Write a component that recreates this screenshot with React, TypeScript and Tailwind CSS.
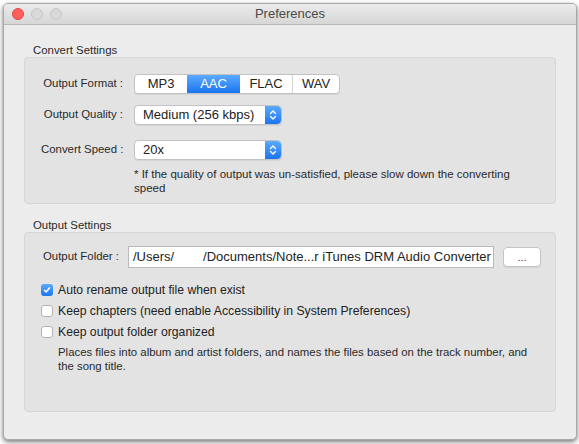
import React from 'react';

const font = { fontFamily: '"Liberation Sans", Arial, sans-serif' };

function Stepper() {
  return (
    <div className="w-[16px] self-stretch rounded-r-[4px] bg-gradient-to-b from-[#5aaaff] to-[#1a74ef] flex items-center justify-center">
      <svg width="8" height="12" viewBox="0 0 8 12" fill="none" stroke="white" strokeWidth="1.4" strokeLinecap="round" strokeLinejoin="round">
        <path d="M1.5 4.5L4 2l2.5 2.5" />
        <path d="M1.5 7.5L4 10l2.5-2.5" />
      </svg>
    </div>
  );
}

function Select({ value, width }: { value: string; width: string }) {
  return (
    <div className={`${width} h-[20px] flex bg-white rounded-[4px] border border-[#c2c2c2] shadow-[0_1px_0_rgba(0,0,0,0.06)]`}>
      <div className="flex-1 pl-[8px] text-[13px] leading-[18px] text-[#222]">{value}</div>
      <Stepper />
    </div>
  );
}

function Checkbox({ checked, label }: { checked?: boolean; label: string }) {
  return (
    <div className="h-[20px] flex items-center">
      {checked ? (
        <div className="w-[12px] h-[12px] rounded-[3px] bg-gradient-to-b from-[#5aaaff] to-[#1a74ef] flex items-center justify-center">
          <svg width="8" height="8" viewBox="0 0 8 8" fill="none" stroke="white" strokeWidth="1.5" strokeLinecap="round" strokeLinejoin="round">
            <path d="M1.5 4.3L3.2 6L6.5 1.8" />
          </svg>
        </div>
      ) : (
        <div className="w-[12px] h-[12px] rounded-[3px] bg-white border border-[#b3b3b3]" />
      )}
      <span className="ml-[5px] text-[12.2px] text-[#222]">{label}</span>
    </div>
  );
}

export default function App() {
  const formats = [
    { name: 'MP3', w: 'w-[52px]' },
    { name: 'AAC', w: 'w-[53px]' },
    { name: 'FLAC', w: 'w-[52px]' },
    { name: 'WAV', w: 'w-[47px]' },
  ];

  return (
    <div className="w-[579px] h-[444px] bg-white pl-[3px] pt-[3px] overflow-hidden" style={font}>
      <div className="w-[574px] h-[437px] rounded-[5px] border border-[#a9a9a9] bg-[#ececec] shadow-[0_2px_5px_rgba(0,0,0,0.55)] overflow-hidden flex flex-col">
        {/* Title bar */}
        <div className="h-[21px] shrink-0 grid grid-cols-[1fr_auto_1fr] items-center bg-gradient-to-b from-[#ebebeb] to-[#d6d6d6] border-b border-[#b9b9b9]">
          <div className="flex items-center gap-[7px] pl-[8px]">
            <div className="w-[12px] h-[12px] rounded-full bg-[#fc605c] border border-[#de4a46]" />
            <div className="w-[12px] h-[12px] rounded-full bg-[#d9d9d9] border border-[#c6c6c6]" />
            <div className="w-[12px] h-[12px] rounded-full bg-[#d9d9d9] border border-[#c6c6c6]" />
          </div>
          <div className="text-[13px] text-[#4a4a4a]">Preferences</div>
          <div />
        </div>

        <div className="px-[20px] pt-[18px]">
          {/* Convert Settings */}
          <div className="pl-[9px] text-[11.4px] leading-[14px] text-[#2a2a2a]">Convert Settings</div>
          <div className="h-[147px] rounded-[4px] border border-[#d6d6d6] bg-[#e3e3e3] pl-[16px] pt-[16px]">
            <div className="flex items-center h-[20px]">
              <div className="w-[82px] text-right text-[11.4px] text-[#2a2a2a] whitespace-nowrap">Output Format :</div>
              <div className="ml-[11px] flex h-[20px] rounded-[4px] bg-white border border-[#c2c2c2] shadow-[0_1px_0_rgba(0,0,0,0.06)] overflow-hidden">
                {formats.map((f, i) => (
                  <div
                    key={f.name}
                    className={`${f.w} flex items-center justify-center text-[13px] ${
                      f.name === 'AAC'
                        ? 'bg-gradient-to-b from-[#5aaaff] to-[#1a74ef] text-white'
                        : 'text-[#222]'
                    } ${i > 0 && f.name !== 'AAC' && formats[i - 1].name !== 'AAC' ? 'border-l border-[#d4d4d4]' : ''}`}
                  >
                    {f.name}
                  </div>
                ))}
              </div>
            </div>

            <div className="flex items-center h-[20px] mt-[11px]">
              <div className="w-[82px] text-right text-[11.4px] text-[#2a2a2a] whitespace-nowrap">Output Quality :</div>
              <div className="ml-[11px]">
                <Select value="Medium (256 kbps)" width="w-[148px]" />
              </div>
            </div>

            <div className="flex items-center h-[20px] mt-[15px]">
              <div className="w-[82px] text-right text-[11.4px] text-[#2a2a2a] whitespace-nowrap">Convert Speed :</div>
              <div className="ml-[11px]">
                <Select value="20x" width="w-[148px]" />
              </div>
            </div>

            <div className="ml-[93px] mt-[7px] w-[392px] text-[11.5px] leading-[14px] text-[#2a2a2a]">
              * If the quality of output was un-satisfied, please slow down the converting speed
            </div>
          </div>

          {/* Output Settings */}
          <div className="mt-[14px] pl-[9px] text-[11.4px] leading-[14px] text-[#2a2a2a]">Output Settings</div>
          <div className="h-[180px] rounded-[4px] border border-[#d6d6d6] bg-[#e3e3e3] pl-[16px] pt-[13px]">
            <div className="flex items-center h-[22px]">
              <div className="w-[82px] pl-[2px] text-[11.4px] text-[#2a2a2a] whitespace-nowrap">Output Folder :</div>
              <div className="ml-[5px] w-[366px] h-[22px] bg-white border border-[#b9b9b9] pl-[4px] text-[13px] leading-[20px] text-[#222] whitespace-pre overflow-hidden">
                {'/Users/        /Documents/Note...r iTunes DRM Audio Converter'}
              </div>
              <div className="ml-[9px] w-[38px] h-[20px] rounded-[4px] bg-white border border-[#c4c4c4] shadow-[0_1px_0_rgba(0,0,0,0.06)] flex items-center justify-center text-[11px] text-[#444]">
                ...
              </div>
            </div>

            <div className="mt-[12px] flex flex-col gap-[1px]">
              <Checkbox checked label="Auto rename output file when exist" />
              <Checkbox label="Keep chapters (need enable Accessibility in System Preferences)" />
              <Checkbox label="Keep output folder organized" />
            </div>
            <div className="ml-[17px] mt-[3px] w-[482px] text-[11.4px] leading-[14px] text-[#2a2a2a]">
              Places files into album and artist folders, and names the files based on the track number, and the song title.
            </div>
          </div>
        </div>
      </div>
    </div>
  );
}
